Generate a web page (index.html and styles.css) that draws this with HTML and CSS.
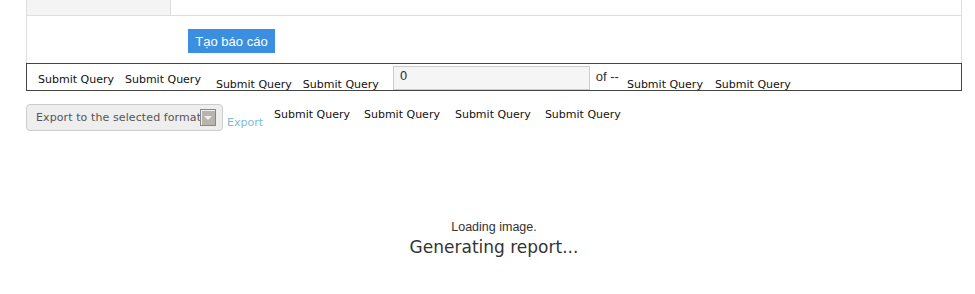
FILE: index.html
```html
<!DOCTYPE html>
<html lang="vi">
  <head>
    <meta charset="UTF-8" />
    <meta name="viewport" content="width=device-width, initial-scale=1.0" />
    <title>Báo cáo</title>
    <link rel="stylesheet" href="styles.css">
  </head>
  <body>
    <div class="page">
      <!-- Bảng tham số -->
      <div class="params">
        <div class="params-row">
          <div class="params-label"></div>
          <div class="params-value"></div>
        </div>
        <div class="params-action">
          <button class="btn-report">Tạo báo cáo</button>
        </div>
      </div>

      <!-- Thanh điều hướng -->
      <div class="toolbar">
        <span class="query q1">Submit Query</span>
        <span class="query q2">Submit Query</span>
        <span class="query q3 low">Submit Query</span>
        <span class="query q4 low">Submit Query</span>
        <input class="page-input" type="text" value="0" />
        <span class="page-of">of --</span>
        <span class="query q5 low">Submit Query</span>
        <span class="query q6 low">Submit Query</span>
      </div>

      <div class="export-bar">
        <div class="export-select">
          <span>Export to the selected format</span>
          <span class="select-arrow"></span>
        </div>
        <a class="export-link" href="#">Export</a>
        <span class="query e1">Submit Query</span>
        <span class="query e2">Submit Query</span>
        <span class="query e3">Submit Query</span>
        <span class="query e4">Submit Query</span>
      </div>

      <div class="loading">
        <p class="loading-image">Loading image.</p>
        <p class="loading-text">Generating report...</p>
      </div>
    </div>
  </body>
</html>
```

FILE: styles.css
```css
* {
  box-sizing: border-box;
  margin: 0;
  padding: 0;
}
body {
  font-family: "DejaVu Sans", Verdana, sans-serif;
  background: #fff;
  color: #222;
}
.page {
  margin-left: 26px;
  width: 936px;
}

/* Bảng tham số */
.params {
  border-left: 1px solid #ddd;
  border-right: 1px solid #ddd;
  width: 936px;
}
.params-row {
  display: flex;
  height: 16px;
  border-bottom: 1px solid #ddd;
}
.params-label {
  width: 144px;
  background: #f4f4f4;
  border-right: 1px solid #ddd;
}
.params-action {
  height: 47px;
  padding: 13px 0 0 161px;
}
.btn-report {
  display: block;
  width: 87px;
  height: 24px;
  background: #3b8fe0;
  color: #fff;
  border: none;
  font-family: "Liberation Sans", Arial, sans-serif;
  font-size: 13px;
}

/* Thanh điều hướng */
.toolbar {
  display: flex;
  align-items: flex-start;
  height: 28px;
  border: 1px solid #444;
  padding-left: 11px;
}
.query {
  font-size: 11px;
  color: #111;
  white-space: nowrap;
  line-height: 13px;
}
.toolbar .query {
  margin-top: 9px;
}
.toolbar .query.low {
  margin-top: 14px;
}
.q2 { margin-left: 11px; }
.q3 { margin-left: 15px; }
.q4 { margin-left: 11px; }
.page-input {
  margin: 2px 0 0 14px;
  width: 197px;
  height: 24px;
  border: 1px solid #ccc;
  background: #f5f5f5;
  padding: 0 6px 4px;
  font-family: "DejaVu Sans", Verdana, sans-serif;
  font-size: 12px;
  color: #333;
}
.page-of {
  margin: 5px 0 0 6px;
  font-family: "Liberation Sans", Arial, sans-serif;
  font-size: 13px;
  color: #333;
}
.q5 { margin-left: 8px; }
.q6 { margin-left: 12px; }

/* Xuất báo cáo */
.export-bar {
  display: flex;
  align-items: flex-start;
  margin-top: 13px;
  height: 28px;
}
.export-select {
  display: flex;
  align-items: center;
  width: 197px;
  height: 27px;
  border: 1px solid #ccc;
  border-radius: 4px;
  background: #eee;
  padding-left: 9px;
  font-size: 11px;
  letter-spacing: 0.1px;
  color: #555;
  overflow: hidden;
  white-space: nowrap;
}
.export-select span:first-child {
  width: 164px;
  overflow: hidden;
}
.select-arrow {
  position: relative;
  flex: none;
  width: 16px;
  height: 17px;
  background: #b8b4ac;
  border: 1px solid #888;
  box-shadow: inset 1px 1px 0 #eee;
}
.select-arrow::after {
  content: "";
  position: absolute;
  top: 6px;
  left: 3px;
  border-left: 4px solid transparent;
  border-right: 4px solid transparent;
  border-top: 4px solid #f0f0f0;
}
.export-link {
  margin: 12px 0 0 4px;
  font-size: 11px;
  color: #7bbddb;
  text-decoration: none;
}
.export-bar .query {
  margin-top: 4px;
}
.e1 { margin-left: 11px; }
.e2 { margin-left: 14px; }
.e3 { margin-left: 15px; }
.e4 { margin-left: 14px; }

/* Đang tải */
.loading {
  text-align: center;
  margin-top: 88px;
  color: #333;
}
.loading-image {
  font-family: "Liberation Sans", Arial, sans-serif;
  font-size: 12.5px;
  line-height: 14px;
}
.loading-text {
  font-size: 17px;
  line-height: 22px;
  margin-top: 2px;
}
```
